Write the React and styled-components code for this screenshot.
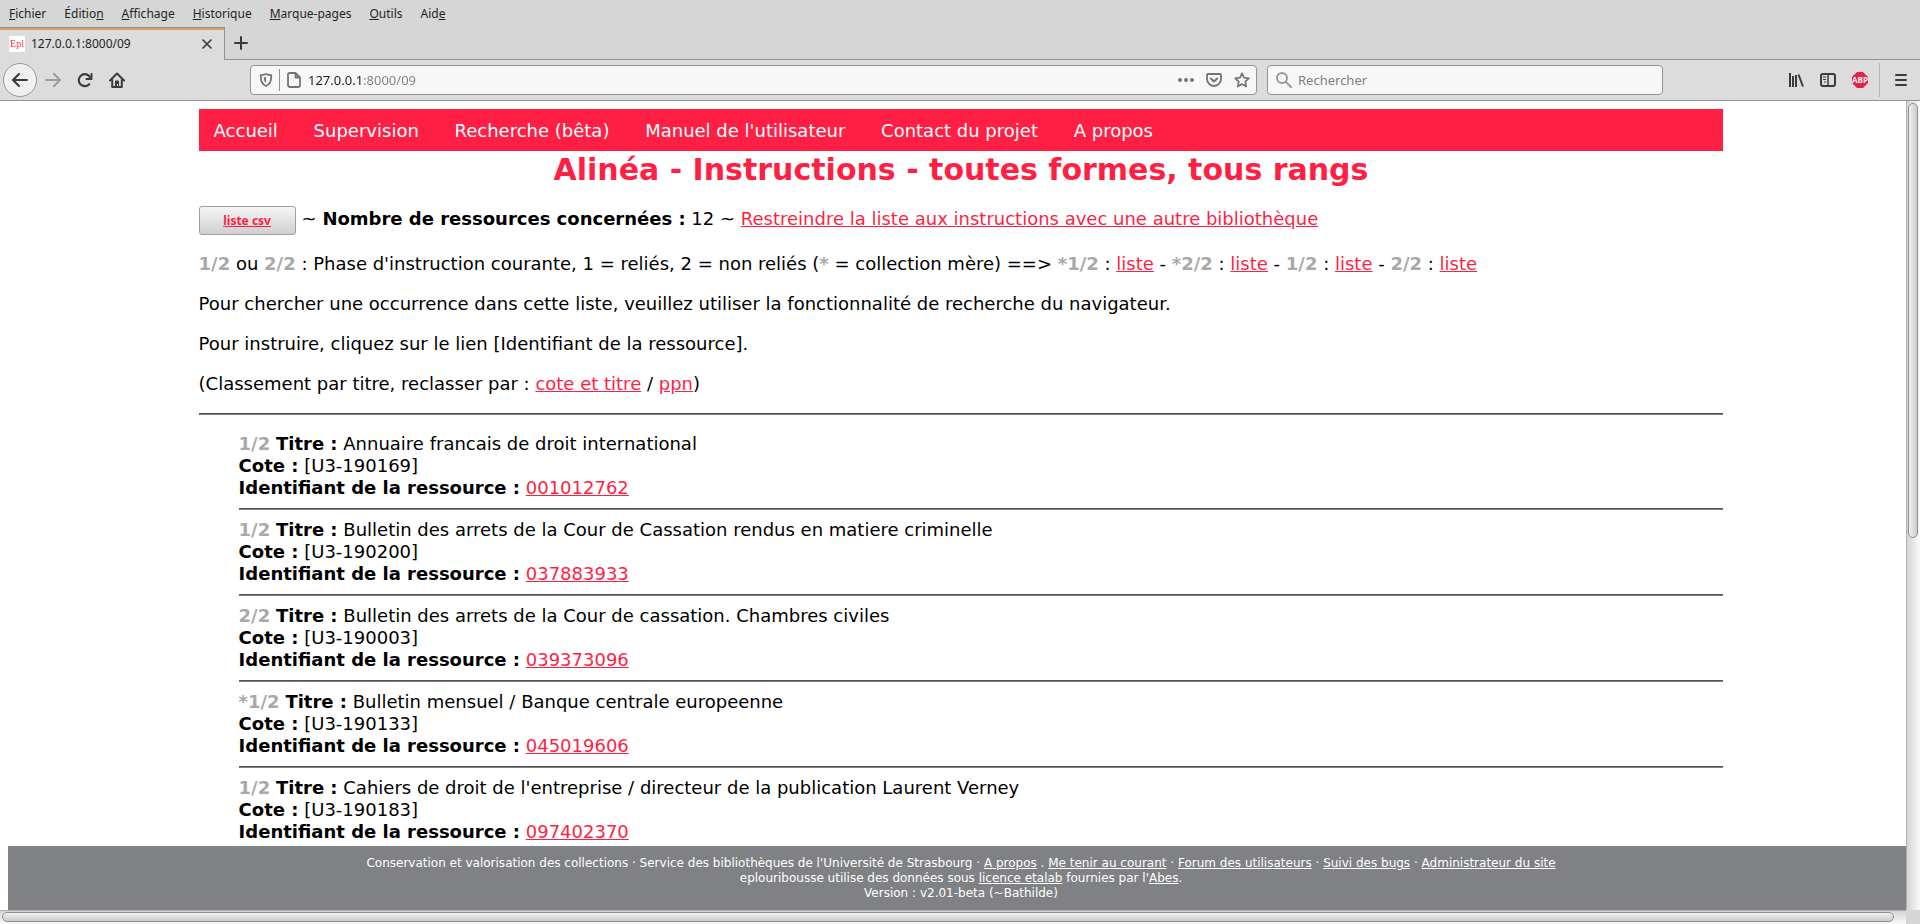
import React from "react";
import styled, { createGlobalStyle } from "styled-components";

const RED = "#ff1f44";

const GlobalStyle = createGlobalStyle`
  * { box-sizing: border-box; }
  body { margin: 0; background: #fff; }
`;

const Window = styled.div`
  display: flex;
  flex-direction: column;
  height: 100vh;
  font-family: "Noto Sans", sans-serif;
  color: #1f1f1f;
`;

const MenuBar = styled.nav`
  display: flex;
  flex: none;
  align-items: center;
  gap: 18px;
  height: 27px;
  padding: 0 9px;
  background: #d6d6d6;
`;

const MenuButton = styled.button`
  padding: 0;
  border: 0;
  background: none;
  font: inherit;
  font-size: 12px;
  line-height: 16px;
  color: inherit;
`;

const TabStrip = styled.div`
  display: flex;
  flex: none;
  height: 33px;
  background: #d6d6d6;
`;

const Tab = styled.div`
  display: flex;
  align-items: center;
  gap: 6px;
  width: 225px;
  padding: 0 9px;
  border-top: 1px solid #939393;
  border-right: 1px solid #939393;
  background: #dcdcdc;
  box-shadow: inset 0 2px #dca060;
  font-size: 12px;
  line-height: 16px;
`;

const TabTitle = styled.span`
  flex: 1;
`;

const Favicon = styled.span`
  display: flex;
  align-items: center;
  justify-content: center;
  width: 16px;
  height: 16px;
  border-radius: 1px;
  background: #fff;
  color: ${RED};
  font-family: "Liberation Serif", serif;
  font-size: 10px;
  line-height: 16px;
`;

const StripRest = styled.div`
  display: flex;
  flex: 1;
  align-items: center;
  padding-left: 8px;
  border-bottom: 1px solid #939393;
`;

const IconButton = styled.button`
  display: flex;
  flex: none;
  align-items: center;
  justify-content: center;
  width: ${(p) => p.$size || 16}px;
  height: ${(p) => p.$size || 16}px;
  padding: 0;
  border: ${(p) => (p.$round ? "1px solid #999" : "0")};
  border-radius: ${(p) => (p.$round ? "50%" : "0")};
  background: ${(p) => (p.$round ? "#f0f0f0" : "none")};
  color: ${(p) => p.$color || "#3b3b3b"};
`;

const ToolBar = styled.div`
  display: flex;
  flex: none;
  align-items: center;
  height: 41px;
  padding: 0 11px 0 3px;
  border-bottom: 1px solid #939393;
  background: #dcdcdc;
`;

const ToolGroup = styled.div`
  display: flex;
  flex: none;
  align-items: center;
  gap: ${(p) => p.$gap}px;
`;

const Fields = styled.div`
  display: flex;
  flex: 1;
  gap: 10px;
  min-width: 0;
`;

const Spacer = styled.div`
  flex: 0 1 125px;
`;

const Field = styled.div`
  display: flex;
  flex: ${(p) => (p.$grow ? "1 1 0" : "0 1 396px")};
  align-items: center;
  gap: 6px;
  min-width: 0;
  height: 30px;
  padding: 0 6px 0 8px;
  border: 1px solid #939393;
  border-radius: 4px;
  background: #f7f7f7;
  color: #747474;
`;

const FieldInput = styled.input`
  flex: 1;
  min-width: 0;
  height: 20px;
  padding: 0;
  border: 0;
  outline: 0;
  background: none;
  font-family: "Noto Sans", sans-serif;
  font-size: 13px;
  line-height: 20px;
  color: #222;
  &::placeholder { color: #808080; opacity: 1; }
`;

const AddressInput = styled(FieldInput)`
  background: linear-gradient(to right, #1c1c1c 53px, #808080 53px);
  background-clip: text;
  -webkit-background-clip: text;
  -webkit-text-fill-color: transparent;
`;

const Rule = styled.span`
  flex: none;
  width: 1px;
  height: ${(p) => p.$h}px;
  background: ${(p) => p.$c};
`;

const Viewport = styled.div`
  display: grid;
  flex: 1;
  min-height: 0;
  grid-template-columns: minmax(0, 1fr) 14px;
  grid-template-rows: minmax(0, 1fr) 14px;
  background: #d6d6d6;
`;

const Track = styled.div`
  padding: ${(p) => (p.$vertical ? "2px 2px 2px 1px" : "1px 2px 2px 2px")};
  border-${(p) => (p.$vertical ? "left" : "top")}: 1px solid #b2b2b2;
  background: linear-gradient(${(p) => (p.$vertical ? "to right" : "to bottom")}, #d4d4d4, #fafafa);
`;

const Thumb = styled.div`
  width: ${(p) => (p.$vertical ? "100%" : "calc(100% - 10px)")};
  height: ${(p) => (p.$vertical ? "54%" : "100%")};
  border: 1px solid #8f8f8f;
  border-radius: 5px;
  background: linear-gradient(${(p) => (p.$vertical ? "to right" : "to bottom")}, #f0f0f0, #cbcbcb);
`;

const Frame = styled.div`
  display: flex;
  flex-direction: column;
  overflow: hidden;
  background: #fff;
  font-family: "DejaVu Sans", sans-serif;
  font-size: 18px;
  line-height: 22px;
  color: #000;
`;

const Page = styled.main`
  flex: 1;
  min-height: 0;
  width: 100%;
  margin-left: 8px;
  padding: 8px 10% 0;
  overflow: hidden;
`;

const SiteNav = styled.nav`
  padding: 11px 0 9px;
  background: ${RED};
`;

const SiteLink = styled.a`
  padding: 0 15px;
  color: #fff;
  text-decoration: none;
`;

const Title = styled.h1`
  margin: 0 0 18px;
  color: ${RED};
  font-size: 30px;
  line-height: 37px;
  text-align: center;
`;

const Summary = styled.div`
  display: flex;
  align-items: baseline;
  gap: 6px;
  margin-bottom: 18px;
`;

const CsvButton = styled.button`
  width: 97px;
  height: 29px;
  padding: 0;
  border: 1px solid #a0a0a0;
  border-radius: 3px;
  background: linear-gradient(#f6f6f6, #cfcfcf);
  color: ${RED};
  font-family: "Noto Sans", sans-serif;
  font-size: 12px;
  font-weight: bold;
  text-decoration: underline;
`;

const Paragraph = styled.p`
  margin: 0 0 18px;
`;

const Link = styled.a`
  color: ${RED};
`;

const Phase = styled.b`
  color: #a9a9a9;
`;

const Divider = styled.hr`
  height: 2px;
  margin: ${(p) => p.$m}px 0;
  border: 0;
  border-top: 1px solid #505050;
  background: #808080;
`;

const List = styled.ul`
  margin: 18px 0;
  padding: 0 0 0 40px;
  list-style: none;
`;

const Footer = styled.footer`
  flex: none;
  width: 100%;
  margin-left: 8px;
  padding: 10px 0 9px;
  background: #808184;
  color: #fff;
  font-size: 12px;
  line-height: 15px;
  text-align: center;
`;

const FooterLink = styled.a`
  color: #fff;
`;

const Svg = ({ size = 16, sw = 2, children }) => (
  <svg width={size} height={size} viewBox={`0 0 ${size} ${size}`} fill="none" stroke="currentColor" strokeWidth={sw} strokeLinecap="round" strokeLinejoin="round" aria-hidden="true">
    {children}
  </svg>
);

const menus = [
  ["", "F", "ichier"],
  ["Éditio", "n", ""],
  ["", "A", "ffichage"],
  ["", "H", "istorique"],
  ["", "M", "arque-pages"],
  ["", "O", "utils"],
  ["Aid", "e", ""],
];

const siteLinks = ["Accueil", "Supervision", "Recherche (bêta)", "Manuel de l'utilisateur", "Contact du projet", "A propos"];

const phases = ["*1/2", "*2/2", "1/2", "2/2"];

const resources = [
  { phase: "1/2", title: "Annuaire francais de droit international", cote: "U3-190169", id: "001012762" },
  { phase: "1/2", title: "Bulletin des arrets de la Cour de Cassation rendus en matiere criminelle", cote: "U3-190200", id: "037883933" },
  { phase: "2/2", title: "Bulletin des arrets de la Cour de cassation. Chambres civiles", cote: "U3-190003", id: "039373096" },
  { phase: "*1/2", title: "Bulletin mensuel / Banque centrale europeenne", cote: "U3-190133", id: "045019606" },
  { phase: "1/2", title: "Cahiers de droit de l'entreprise / directeur de la publication Laurent Verney", cote: "U3-190183", id: "097402370" },
];

function BrowserChrome() {
  return (
    <>
      <MenuBar>
        {menus.map(([before, key, after]) => (
          <MenuButton key={before + key + after}>
            {before}
            <u>{key}</u>
            {after}
          </MenuButton>
        ))}
      </MenuBar>
      <TabStrip>
        <Tab>
          <Favicon>Epl</Favicon>
          <TabTitle>127.0.0.1:8000/09</TabTitle>
          <IconButton aria-label="Fermer l'onglet">
            <Svg sw={1.7}><path d="M4 4l8 8M12 4l-8 8" /></Svg>
          </IconButton>
        </Tab>
        <StripRest>
          <IconButton aria-label="Nouvel onglet">
            <Svg sw={2}><path d="M8 2v12M2 8h12" /></Svg>
          </IconButton>
        </StripRest>
      </TabStrip>
      <ToolBar>
        <ToolGroup $gap={16}>
          <ToolGroup $gap={8}>
            <IconButton $round $size={34} aria-label="Page précédente">
              <Svg><path d="M15 8H1.500M7 2L1 8l6 6" /></Svg>
            </IconButton>
            <IconButton $color="#9c9c9c" aria-label="Page suivante">
              <Svg><path d="M1 8h13.500M9 2l6 6-6 6" /></Svg>
            </IconButton>
          </ToolGroup>
          <IconButton aria-label="Actualiser">
            <Svg><path d="M12.200 12.200A6 6 0 1 1 13.200 5.600" strokeWidth="2.200" /><path d="M14.500 2v5H9.500" /></Svg>
          </IconButton>
          <IconButton aria-label="Accueil du navigateur">
            <Svg>
              <path d="M1 8.500L8 1.500l7 7" />
              <path d="M3.200 8v7h9.600V8" />
              <path d="M6.500 15V9h3v6z" fill="currentColor" strokeWidth="1" />
              <path d="M8.500 12v2" stroke="#dcdcdc" strokeWidth="1" strokeLinecap="butt" />
            </Svg>
          </IconButton>
        </ToolGroup>
        <Spacer />
        <Fields>
          <Field $grow>
            <Svg size={14}>
              <path d="M7 1c2 1 3.500 1.200 5.200 1.200C12.500 8 11 11.500 7 13 3 11.500 1.500 8 1.800 2.200 3.500 2.200 5 2 7 1z" strokeWidth="1.800" />
              <path d="M7 4v6c-1.600-1-2.200-3-2.200-5.400C5.600 4.500 6.300 4.300 7 4z" fill="currentColor" stroke="none" />
            </Svg>
            <Rule $h={22} $c="#939393" />
            <Svg><path d="M3.500 1h6L14 5.500v7.500a2 2 0 0 1-2 2H4a2 2 0 0 1-2-2V2.500A1.500 1.500 0 0 1 3.500 1zM9.500 1v4.500H14" strokeWidth="1.800" /></Svg>
            <AddressInput aria-label="Adresse" defaultValue="127.0.0.1:8000/09" />
            <ToolGroup $gap={12}>
              <IconButton $color="#747474" aria-label="Actions">
                <Svg><g fill="currentColor" stroke="none"><circle cx="2" cy="8" r="2" /><circle cx="8" cy="8" r="2" /><circle cx="14" cy="8" r="2" /></g></Svg>
              </IconButton>
              <IconButton $color="#747474" aria-label="Pocket">
                <Svg><path d="M2 2h12a1 1 0 0 1 1 1v4a7 7 0 0 1-14 0V3a1 1 0 0 1 1-1z" strokeWidth="1.800" /><path d="M4.800 6.500L8 9.500l3.200-3" /></Svg>
              </IconButton>
              <IconButton $color="#747474" aria-label="Marquer cette page">
                <Svg><path d="M8 1.300l2 4.400 4.800.6-3.500 3.300.9 4.900L8 12.100l-4.200 2.400.9-4.900L1.200 6.300 6 5.700z" strokeWidth="1.700" /></Svg>
              </IconButton>
            </ToolGroup>
          </Field>
          <Field>
            <Svg><g stroke="#999"><circle cx="6" cy="6" r="5" /><path d="M10 10l5 5" /></g></Svg>
            <FieldInput aria-label="Rechercher" placeholder="Rechercher" />
          </Field>
        </Fields>
        <Spacer />
        <ToolGroup $gap={11}>
          <ToolGroup $gap={16}>
            <IconButton aria-label="Bibliothèque">
              <Svg><path d="M2 1v14M5 4v11M8 3v12" strokeLinecap="butt" /><path d="M10.500 2.500l4.500 12" strokeLinecap="butt" /></Svg>
            </IconButton>
            <IconButton aria-label="Barres latérales">
              <Svg><rect x="1" y="2" width="14" height="12" rx="2" /><path d="M8 2v12" strokeWidth="1.500" /><path d="M3 5h3M3 7.500h3M4 10h2" strokeWidth="1" strokeLinecap="butt" /></Svg>
            </IconButton>
            <IconButton aria-label="Adblock Plus">
              <svg width="16" height="16" viewBox="0 0 16 16">
                <path d="M5 0h6l5 5v6l-5 5H5l-5-5V5z" fill="#ed1e45" />
                <text x="8" y="11" textAnchor="middle" fill="#fff" fontFamily="Open Sans, sans-serif" fontSize="8" fontWeight="bold">ABP</text>
              </svg>
            </IconButton>
          </ToolGroup>
          <ToolGroup $gap={13}>
            <Rule $h={34} $c="#b5b5b5" />
            <IconButton aria-label="Menu">
              <Svg><path d="M3 3h10M3 8h10M3 13h10" /></Svg>
            </IconButton>
          </ToolGroup>
        </ToolGroup>
      </ToolBar>
    </>
  );
}

function Resource({ item }) {
  return (
    <li>
      <Phase>{item.phase}</Phase> <b>Titre :</b> {item.title}
      <br />
      <b>Cote :</b> [{item.cote}]
      <br />
      <b>Identifiant de la ressource :</b> <Link href="#">{item.id}</Link>
      <Divider $m={9} />
    </li>
  );
}

export default function App() {
  return (
    <Window>
      <GlobalStyle />
      <BrowserChrome />
      <Viewport>
        <Frame>
          <Page>
            <SiteNav>
              {siteLinks.map((label) => (
                <React.Fragment key={label}>
                  <SiteLink href="#">{label}</SiteLink>{" "}
                </React.Fragment>
              ))}
            </SiteNav>
            <Title>Alinéa - Instructions - toutes formes, tous rangs</Title>
            <Summary>
              <CsvButton>liste csv</CsvButton>
              <span>
                ~ <b>Nombre de ressources concernées :</b> 12 ~{" "}
                <Link href="#">Restreindre la liste aux instructions avec une autre bibliothèque</Link>
              </span>
            </Summary>
            <Paragraph>
              <Phase>1/2</Phase> ou <Phase>2/2</Phase> : Phase d'instruction courante, 1 = reliés, 2 = non reliés (
              <Phase>*</Phase> = collection mère) ==&gt;{" "}
              {phases.map((phase, i) => (
                <React.Fragment key={phase}>
                  {i > 0 && " - "}
                  <Phase>{phase}</Phase> : <Link href="#">liste</Link>
                </React.Fragment>
              ))}
            </Paragraph>
            <Paragraph>
              Pour chercher une occurrence dans cette liste, veuillez utiliser la fonctionnalité de recherche du navigateur.
            </Paragraph>
            <Paragraph>Pour instruire, cliquez sur le lien [Identifiant de la ressource].</Paragraph>
            <Paragraph>
              (Classement par titre, reclasser par : <Link href="#">cote et titre</Link> / <Link href="#">ppn</Link>)
            </Paragraph>
            <Divider $m={18} />
            <List>
              {resources.map((item) => (
                <Resource key={item.id} item={item} />
              ))}
            </List>
          </Page>
          <Footer>
            Conservation et valorisation des collections · Service des bibliothèques de l'Université de Strasbourg ·{" "}
            <FooterLink href="#">A propos</FooterLink> . <FooterLink href="#">Me tenir au courant</FooterLink> ·{" "}
            <FooterLink href="#">Forum des utilisateurs</FooterLink> · <FooterLink href="#">Suivi des bugs</FooterLink> ·{" "}
            <FooterLink href="#">Administrateur du site</FooterLink>
            <br />
            eplouribousse utilise des données sous <FooterLink href="#">licence etalab</FooterLink> fournies par l'
            <FooterLink href="#">Abes</FooterLink>.
            <br />
            Version : v2.01-beta (~Bathilde)
          </Footer>
        </Frame>
        <Track $vertical>
          <Thumb $vertical />
        </Track>
        <Track>
          <Thumb />
        </Track>
      </Viewport>
    </Window>
  );
}
